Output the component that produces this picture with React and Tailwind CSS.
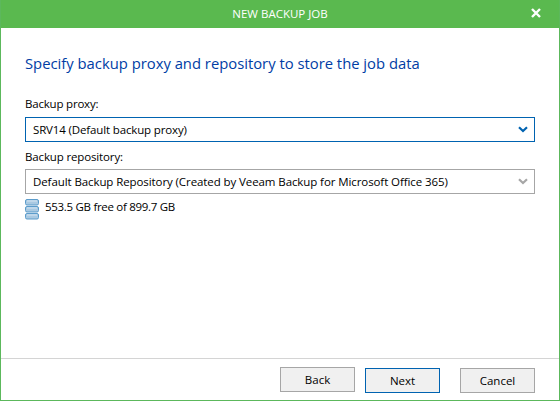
import React from "react";

const Chevron = ({ color }) => (
  <svg width="10" height="7" viewBox="0 0 10 7" className="block">
    <path d="M1 1.2 L5 5 L9 1.2" fill="none" stroke={color} strokeWidth="2.2" />
  </svg>
);

const Select = ({ active, text, chevron, tracking }) => (
  <div className={`h-[25px] w-[510px] flex items-center justify-between pl-[7px] pr-[6px] border ${active ? "border-[#0063b1]" : "border-[#a6a6a6]"}`}>
    <span className={`text-[11.5px] leading-none text-black ${tracking}`}>{text}</span>
    <Chevron color={chevron} />
  </div>
);

const Btn = ({ children, primary }) => (
  <button className={`w-[75px] h-[25px] bg-[#f0f0f0] border text-[11.5px] text-black ${primary ? "border-[#0063b1]" : "border-[#a6a6a6]"}`}>
    {children}
  </button>
);

const Disc = ({ y }) => (
  <>
    <rect x="0.5" y={y + 0.5} width="13" height="5.5" rx="1.5" fill="#a9c9e2" stroke="#5c9ccb" />
    <rect x="2" y={y + 1.5} width="10" height="1" fill="#d5e5f1" />
  </>
);

export default function App() {
  return (
    <div className="w-[560px] h-[401px] flex flex-col bg-white border border-t-0 border-[#5cb85c] font-['Open_Sans',sans-serif] overflow-hidden">
      <header className="relative -mx-px h-[28px] shrink-0 bg-[#5ab94f] flex items-center justify-center">
        <span className="text-[11.5px] text-white">NEW BACKUP JOB</span>
        <svg width="10" height="10" viewBox="0 0 10 10" className="absolute right-[19px] top-[8px]">
          <path d="M1 1 L9 9 M9 1 L1 9" stroke="#fff" strokeWidth="2.4" />
        </svg>
      </header>
      <main className="flex-1 flex flex-col pl-[24px]">
        <h1 className="mt-[24px] text-[14.8px] leading-[22px] text-[#003da5]">Specify backup proxy and repository to store the job data</h1>
        <label className="mt-[22px] text-[11.5px] tracking-[-0.2px] leading-[16px] text-black">Backup proxy:</label>
        <div className="mt-[5px]"><Select active text="SRV14 (Default backup proxy)" chevron="#0063b1" tracking="tracking-[-0.14px]" /></div>
        <label className="mt-[7px] text-[11.5px] tracking-[-0.14px] leading-[16px] text-black">Backup repository:</label>
        <div className="mt-[4px]"><Select text="Default Backup Repository (Created by Veeam Backup for Microsoft Office 365)" chevron="#a6a6a6" tracking="tracking-[-0.09px]" /></div>
        <div className="mt-[5px] flex items-start gap-[6px]">
          <svg width="14" height="21" viewBox="0 0 14 21" className="block">
            <Disc y={0} />
            <Disc y={7} />
            <Disc y={14} />
          </svg>
          <span className="text-[11.5px] tracking-[-0.3px] leading-[16px] text-black">553.5 GB free of 899.7 GB</span>
        </div>
      </main>
      <footer className="h-[42px] shrink-0 border-t border-[#d4d4d4] pt-[8px] pl-[279px] flex">
        <Btn>Back</Btn>
        <div className="ml-[10px]"><Btn primary>Next</Btn></div>
        <div className="ml-[20px]"><Btn>Cancel</Btn></div>
      </footer>
    </div>
  );
}
